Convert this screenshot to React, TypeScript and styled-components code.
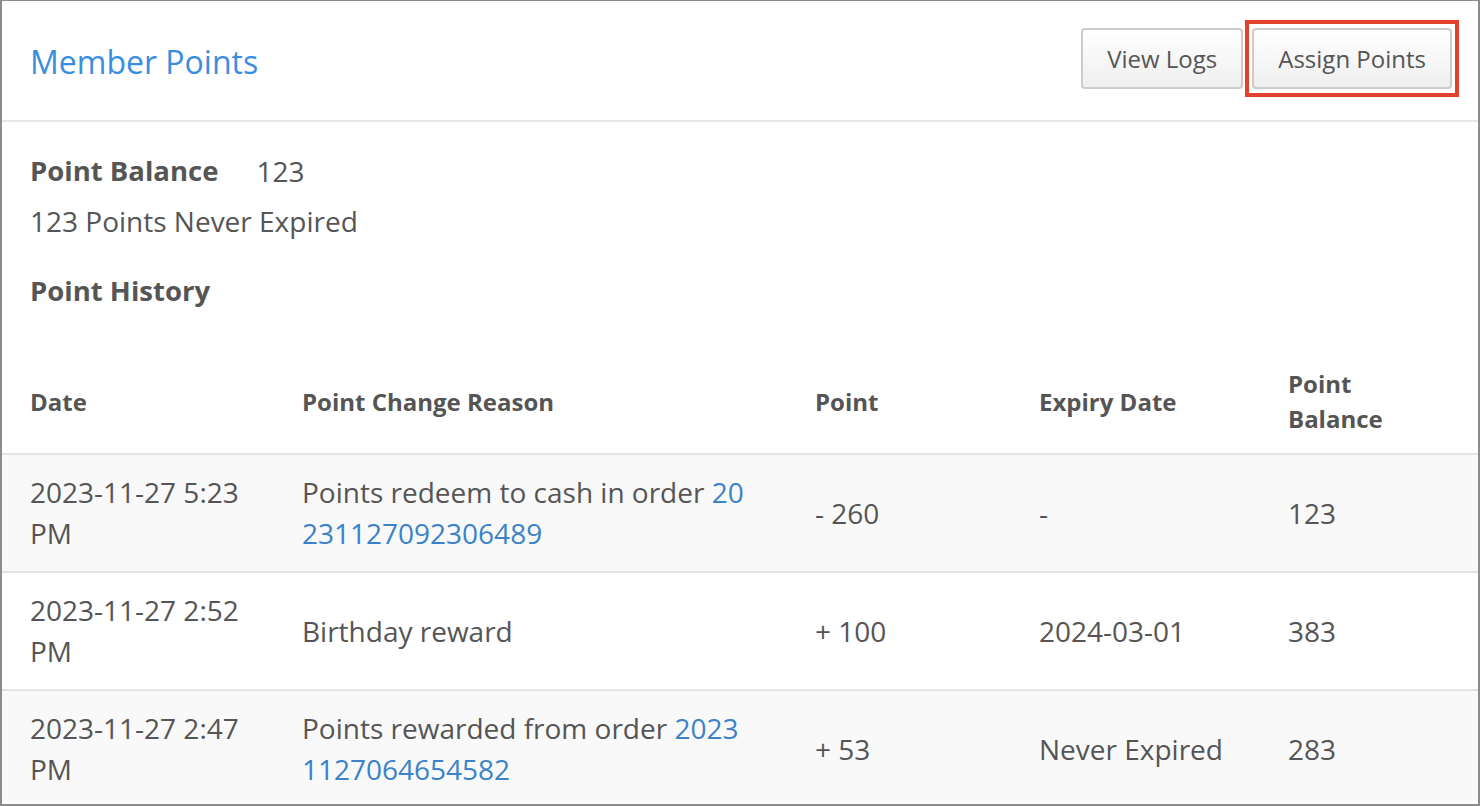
import styled, { createGlobalStyle } from "styled-components";

const GlobalStyle = createGlobalStyle`
  html, body {
    margin: 0;
    padding: 0;
    background: #fff;
  }
  body {
    font-family: "Open Sans", "Noto Sans", Arial, sans-serif;
    color: #555;
    overflow: hidden;
  }
  * {
    box-sizing: border-box;
  }
`;

interface HistoryRow {
  date: string;
  reason: string;
  order?: string;
  point: string;
  expiry: string;
  balance: string;
}

const rows: HistoryRow[] = [
  {
    date: "2023-11-27 5:23 PM",
    reason: "Points redeem to cash in order ",
    order: "20231127092306489",
    point: "- 260",
    expiry: "-",
    balance: "123",
  },
  {
    date: "2023-11-27 2:52 PM",
    reason: "Birthday reward",
    point: "+ 100",
    expiry: "2024-03-01",
    balance: "383",
  },
  {
    date: "2023-11-27 2:47 PM",
    reason: "Points rewarded from order ",
    order: "20231127064654582",
    point: "+ 53",
    expiry: "Never Expired",
    balance: "283",
  },
];

export default function App() {
  return (
    <>
      <GlobalStyle />
      <Panel>
        <PanelHeader>
          <Title>Member Points</Title>
          <ButtonGroup>
            <Button>View Logs</Button>
            <Button highlighted>Assign Points</Button>
          </ButtonGroup>
        </PanelHeader>
        <Summary>
          <BalanceLine>
            <Label>Point Balance</Label>
            <span>123</span>
          </BalanceLine>
          <SummaryLine>123 Points Never Expired</SummaryLine>
          <SectionTitle>Point History</SectionTitle>
        </Summary>
        <Table>
          <colgroup>
            <col style={{ width: 285 }} />
            <col style={{ width: 513 }} />
            <col style={{ width: 224 }} />
            <col style={{ width: 249 }} />
            <col />
          </colgroup>
          <thead>
            <tr>
              <Th>Date</Th>
              <Th>Point Change Reason</Th>
              <Th>Point</Th>
              <Th>Expiry Date</Th>
              <Th>
                Point
                <br />
                Balance
              </Th>
            </tr>
          </thead>
          <tbody>
            {rows.map((row, i) => (
              <Tr key={i} striped={i % 2 === 0}>
                <Td>{row.date}</Td>
                <ReasonTd>
                  {row.reason}
                  {row.order && <OrderLink href="#">{row.order}</OrderLink>}
                </ReasonTd>
                <Td>{row.point}</Td>
                <Td>{row.expiry}</Td>
                <Td>{row.balance}</Td>
              </Tr>
            ))}
          </tbody>
        </Table>
      </Panel>
    </>
  );
}

const Panel = styled.div`
  width: 1480px;
  height: 806px;
  border: 2px solid #8c8c8c;
  border-top-width: 1px;
  overflow: hidden;
  background: #fff;
`;

const PanelHeader = styled.div`
  display: flex;
  align-items: center;
  justify-content: space-between;
  height: 121px;
  padding: 0 26px 4px 28px;
  border-bottom: 2px solid #e6e6e6;
`;

const Title = styled.h1`
  margin: 0;
  padding-top: 6px;
  font-size: 32px;
  font-weight: 400;
  color: #3a8ee0;
`;

const ButtonGroup = styled.div`
  display: flex;
  gap: 9px;
`;

const Button = styled.button<{ highlighted?: boolean }>`
  position: relative;
  height: 61px;
  padding: 0 24px;
  font-family: "Open Sans", "Noto Sans", Arial, sans-serif;
  font-size: 24px;
  color: #555;
  background: linear-gradient(#ffffff, #efefef);
  border: 2px solid #cccccc;
  border-radius: 4px;
  cursor: pointer;

  &::after {
    content: "";
    display: ${(p) => (p.highlighted ? "block" : "none")};
    position: absolute;
    inset: -10px -9px;
    border: 4px solid #e2412b;
    pointer-events: none;
  }
`;

const Summary = styled.div`
  padding: 24px 28px 0;
  font-size: 28px;
  line-height: 50px;
`;

const BalanceLine = styled.div`
  display: flex;
  gap: 38px;
`;

const Label = styled.span`
  font-weight: 700;
  font-size: 27.5px;
`;

const SummaryLine = styled.div``;

const SectionTitle = styled.div`
  margin-top: 20px;
  font-weight: 700;
  font-size: 27.5px;
`;

const Table = styled.table`
  width: 100%;
  margin-top: 33px;
  border-collapse: collapse;
  table-layout: fixed;
`;

const Th = styled.th`
  padding: 17px 15px;
  font-size: 24px;
  line-height: 35px;
  font-weight: 700;
  text-align: left;
  vertical-align: middle;
  border-bottom: 2px solid #e3e3e3;

  &:first-child {
    padding-left: 28px;
  }
`;

const Tr = styled.tr<{ striped: boolean }>`
  background: ${(p) => (p.striped ? "#f9f9f9" : "#fff")};
  border-bottom: 2px solid #e3e3e3;
`;

const Td = styled.td`
  height: 118px;
  padding: 17px 15px;
  font-size: 28px;
  line-height: 41px;
  vertical-align: middle;

  &:first-child {
    padding-left: 28px;
  }
`;

const ReasonTd = styled(Td)`
  padding-right: 52px;
  word-break: break-all;
`;

const OrderLink = styled.a`
  color: #3b82c8;
  text-decoration: none;
`;
